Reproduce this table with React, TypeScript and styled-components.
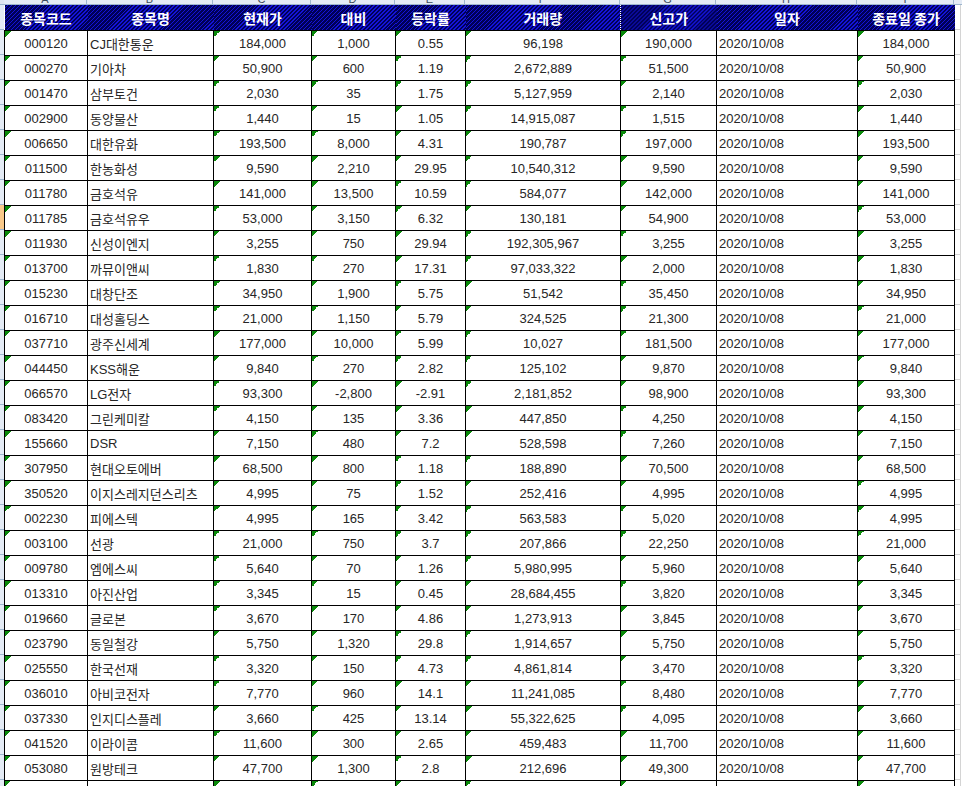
import React from "react";
import styled, { createGlobalStyle, css } from "styled-components";

const GlobalStyle = createGlobalStyle`
  html, body {
    margin: 0;
    padding: 0;
    background: #ffffff;
    overflow: hidden;
  }
  body {
    font-family: "Liberation Sans", "Noto Sans CJK KR", sans-serif;
  }
`;

type Align = "left" | "center";

type Column = {
  letter: string;
  title: string;
  width: number;
  align: Align;
  marker: boolean;
  dashed?: boolean;
};

const columns: Column[] = [
  { letter: "A", title: "종목코드", width: 83, align: "center", marker: true },
  { letter: "B", title: "종목명", width: 126, align: "left", marker: false },
  { letter: "C", title: "현재가", width: 98, align: "center", marker: true },
  { letter: "D", title: "대비", width: 84, align: "center", marker: true },
  { letter: "E", title: "등락률", width: 70, align: "center", marker: true },
  { letter: "F", title: "거래량", width: 155, align: "center", marker: true },
  { letter: "G", title: "신고가", width: 96, align: "center", marker: true, dashed: true },
  { letter: "H", title: "일자", width: 141, align: "left", marker: false },
  { letter: "I", title: "종료일 종가", width: 97, align: "center", marker: true },
];

const DATE = "2020/10/08";

// code, name, price, diff, rate, volume, high, close
const rows: string[][] = [
  ["000120", "CJ대한통운", "184,000", "1,000", "0.55", "96,198", "190,000", "184,000"],
  ["000270", "기아차", "50,900", "600", "1.19", "2,672,889", "51,500", "50,900"],
  ["001470", "삼부토건", "2,030", "35", "1.75", "5,127,959", "2,140", "2,030"],
  ["002900", "동양물산", "1,440", "15", "1.05", "14,915,087", "1,515", "1,440"],
  ["006650", "대한유화", "193,500", "8,000", "4.31", "190,787", "197,000", "193,500"],
  ["011500", "한농화성", "9,590", "2,210", "29.95", "10,540,312", "9,590", "9,590"],
  ["011780", "금호석유", "141,000", "13,500", "10.59", "584,077", "142,000", "141,000"],
  ["011785", "금호석유우", "53,000", "3,150", "6.32", "130,181", "54,900", "53,000"],
  ["011930", "신성이엔지", "3,255", "750", "29.94", "192,305,967", "3,255", "3,255"],
  ["013700", "까뮤이앤씨", "1,830", "270", "17.31", "97,033,322", "2,000", "1,830"],
  ["015230", "대창단조", "34,950", "1,900", "5.75", "51,542", "35,450", "34,950"],
  ["016710", "대성홀딩스", "21,000", "1,150", "5.79", "324,525", "21,300", "21,000"],
  ["037710", "광주신세계", "177,000", "10,000", "5.99", "10,027", "181,500", "177,000"],
  ["044450", "KSS해운", "9,840", "270", "2.82", "125,102", "9,870", "9,840"],
  ["066570", "LG전자", "93,300", "-2,800", "-2.91", "2,181,852", "98,900", "93,300"],
  ["083420", "그린케미칼", "4,150", "135", "3.36", "447,850", "4,250", "4,150"],
  ["155660", "DSR", "7,150", "480", "7.2", "528,598", "7,260", "7,150"],
  ["307950", "현대오토에버", "68,500", "800", "1.18", "188,890", "70,500", "68,500"],
  ["350520", "이지스레지던스리츠", "4,995", "75", "1.52", "252,416", "4,995", "4,995"],
  ["002230", "피에스텍", "4,995", "165", "3.42", "563,583", "5,020", "4,995"],
  ["003100", "선광", "21,000", "750", "3.7", "207,866", "22,250", "21,000"],
  ["009780", "엠에스씨", "5,640", "70", "1.26", "5,980,995", "5,960", "5,640"],
  ["013310", "아진산업", "3,345", "15", "0.45", "28,684,455", "3,820", "3,345"],
  ["019660", "글로본", "3,670", "170", "4.86", "1,273,913", "3,845", "3,670"],
  ["023790", "동일철강", "5,750", "1,320", "29.8", "1,914,657", "5,750", "5,750"],
  ["025550", "한국선재", "3,320", "150", "4.73", "4,861,814", "3,470", "3,320"],
  ["036010", "아비코전자", "7,770", "960", "14.1", "11,241,085", "8,480", "7,770"],
  ["037330", "인지디스플레", "3,660", "425", "13.14", "55,322,625", "4,095", "3,660"],
  ["041520", "이라이콤", "11,600", "300", "2.65", "459,483", "11,700", "11,600"],
  ["053080", "원방테크", "47,700", "1,300", "2.8", "212,696", "49,300", "47,700"],
];

const toCells = (r: string[]) => [r[0], r[1], r[2], r[3], r[4], r[5], r[6], DATE, r[7]];

const ACTIVE_ROW = 7;
const TOTAL_WIDTH = columns.reduce((s, c) => s + c.width, 0);

const Sheet = styled.div`
  display: grid;
  grid-template-columns: 4px ${TOTAL_WIDTH + 1}px 1fr;
  grid-template-rows: 5px auto;
  width: 962px;
  height: 786px;
  overflow: hidden;
`;

const Corner = styled.div`
  background: #dfe6ef;
  border-bottom: 1px solid #9eb6ce;
  box-sizing: border-box;
`;

const ColStrip = styled.div`
  display: flex;
  background: #e4ebf5;
  border-bottom: 1px solid #9eb6ce;
  box-sizing: border-box;
  overflow: hidden;
`;

const ColLetter = styled.div<{ $w: number }>`
  flex: 0 0 ${(p) => p.$w}px;
  display: flex;
  align-items: flex-end;
  justify-content: center;
  border-right: 1px solid #9eb6ce;
  box-sizing: border-box;
  font-size: 11px;
  line-height: 11px;
  color: #3b4a5c;
  span {
    margin-bottom: -1px;
  }
`;

const StripFill = styled.div`
  background: #e4ebf5;
  border-bottom: 1px solid #9eb6ce;
  box-sizing: border-box;
`;

const RowStrip = styled.div`
  display: flex;
  flex-direction: column;
`;

const RowHead = styled.div<{ $active?: boolean }>`
  height: 25px;
  flex: 0 0 25px;
  box-sizing: border-box;
  border-bottom: 1px solid #9eb6ce;
  background: ${(p) => (p.$active ? "#f9c98a" : "#e4ebf5")};
`;

const Grid = styled.table`
  border-collapse: collapse;
  table-layout: fixed;
  width: ${TOTAL_WIDTH + 1}px;
  font-size: 13px;
  color: #262626;
`;

const HeadCell = styled.th<{ $dashed?: boolean }>`
  height: 25px;
  padding: 0;
  font-family: "Noto Sans CJK KR", "Liberation Sans", sans-serif;
  font-size: 14px;
  font-weight: 700;
  color: #ffffff;
  text-align: center;
  white-space: nowrap;
  background: repeating-linear-gradient(
    135deg,
    #000058 0px,
    #000058 1.7px,
    #1414d8 1.7px,
    #1414d8 2.8px
  );
  ${(p) =>
    p.$dashed &&
    css`
      border-left: 1px dotted #ffffff;
    `}
`;

const Row = styled.tr`
  height: 25px;
`;

const Cell = styled.td<{ $align: Align; $marker: boolean; $dashed?: boolean }>`
  position: relative;
  padding: 0;
  padding-left: ${(p) => (p.$align === "left" ? "2px" : "0")};
  border: 1px solid #000000;
  ${(p) =>
    p.$dashed &&
    css`
      border-left: 1px dashed #000000;
    `}
  text-align: ${(p) => p.$align};
  white-space: nowrap;
  overflow: hidden;
  font-family: "Liberation Sans", "Noto Sans CJK KR", sans-serif;
  ${(p) =>
    p.$marker &&
    css`
      &::before {
        content: "";
        position: absolute;
        top: 0;
        left: 0;
        width: 6px;
        height: 6px;
        background: linear-gradient(135deg, #0a8a0a 50%, transparent 50%);
      }
    `}
`;

const RightFill = styled.div`
  background-color: #ffffff;
  background-image: repeating-linear-gradient(
    to bottom,
    transparent 0px,
    transparent 24px,
    #d4d4d4 24px,
    #d4d4d4 25px
  );
  border-right: 1px solid #d4d4d4;
  margin-right: 1px;
`;

export default function App() {
  return (
    <>
      <GlobalStyle />
      <Sheet>
        <Corner />
        <ColStrip>
          {columns.map((c) => (
            <ColLetter key={c.letter} $w={c.width}>
              <span>{c.letter}</span>
            </ColLetter>
          ))}
        </ColStrip>
        <StripFill />

        <RowStrip>
          <RowHead />
          {rows.map((_, i) => (
            <RowHead key={i} $active={i === ACTIVE_ROW} />
          ))}
          <RowHead />
        </RowStrip>

        <Grid>
          <colgroup>
            {columns.map((c) => (
              <col key={c.letter} style={{ width: c.width }} />
            ))}
          </colgroup>
          <thead>
            <tr>
              {columns.map((c) => (
                <HeadCell key={c.letter} $dashed={c.dashed}>
                  {c.title}
                </HeadCell>
              ))}
            </tr>
          </thead>
          <tbody>
            {rows.map((r) => (
              <Row key={r[0]}>
                {toCells(r).map((v, j) => (
                  <Cell
                    key={j}
                    $align={columns[j].align}
                    $marker={columns[j].marker}
                    $dashed={columns[j].dashed}
                  >
                    {v}
                  </Cell>
                ))}
              </Row>
            ))}
            <Row>
              {columns.map((c) => (
                <Cell key={c.letter} $align={c.align} $marker={c.marker} $dashed={c.dashed} />
              ))}
            </Row>
          </tbody>
        </Grid>

        <RightFill />
      </Sheet>
    </>
  );
}
